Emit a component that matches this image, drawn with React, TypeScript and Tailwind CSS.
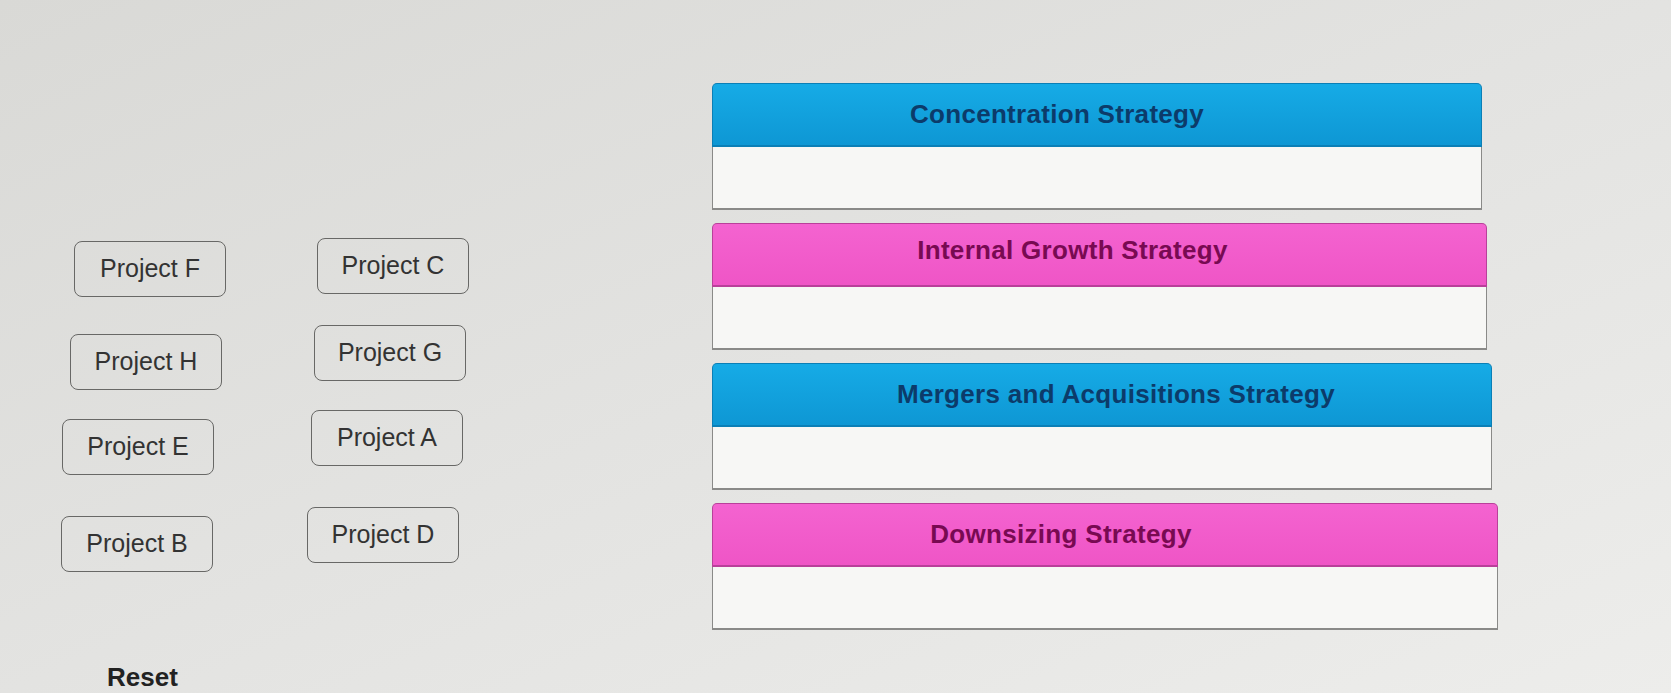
const leftProjects = [
  { label: 'Project F', cls: 'ml-[74px] mt-[241px]' },
  { label: 'Project H', cls: 'ml-[70px] mt-[37px]' },
  { label: 'Project E', cls: 'ml-[62px] mt-[29px]' },
  { label: 'Project B', cls: 'ml-[61px] mt-[41px]' },
]

const rightProjects = [
  { label: 'Project C', cls: 'ml-[317px] mt-[238px]' },
  { label: 'Project G', cls: 'ml-[314px] mt-[31px]' },
  { label: 'Project A', cls: 'ml-[311px] mt-[29px]' },
  { label: 'Project D', cls: 'ml-[307px] mt-[41px]' },
]

type Bucket = {
  title: string
  tone: 'blue' | 'pink'
  width: string
  label: string
}

const buckets: Bucket[] = [
  { title: 'Concentration Strategy', tone: 'blue', width: 'w-[770px]', label: 'pr-[80px]' },
  { title: 'Internal Growth Strategy', tone: 'pink', width: 'w-[775px]', label: 'pr-[54px] pb-[8px]' },
  { title: 'Mergers and Acquisitions Strategy', tone: 'blue', width: 'w-[780px]', label: 'pl-[28px]' },
  { title: 'Downsizing Strategy', tone: 'pink', width: 'w-[786px]', label: 'pr-[88px]' },
]

function ProjectChip({ label, className }: { label: string; className: string }) {
  return (
    <button
      type="button"
      className={`flex h-[56px] w-[152px] items-center justify-center rounded-[8px] border-[1.5px] border-[#686866] text-[25px] text-[#333333] ${className}`}
    >
      {label}
    </button>
  )
}

function DropBucket({ title, tone, width, label }: Bucket) {
  const header =
    tone === 'blue'
      ? 'bg-linear-to-b from-[#16abe6] to-[#0e97d4] border-[#0b7fb6] text-[#0c3b6a]'
      : 'bg-linear-to-b from-[#f463d0] to-[#ef55c6] border-[#b9409a] text-[#780a52]'

  return (
    <div className={`flex flex-col ${width}`}>
      <div
        className={`flex h-[64px] items-center justify-center rounded-t-[5px] border border-b-2 text-[26px] font-bold tracking-[0.3px] ${header} ${label}`}
      >
        {title}
      </div>
      <div className="h-[63px] border-x-[1.5px] border-b-2 border-[#8a8a88] bg-[#f7f7f5]" />
    </div>
  )
}

export default function App() {
  return (
    <div
      className="flex h-[693px] w-full overflow-hidden bg-linear-to-br from-[#d9d9d6] via-[#e3e3e1] to-[#ededeb] text-[#333333]"
      style={{ fontFamily: '"Liberation Sans", Arial, sans-serif' }}
    >
      <div className="flex w-[330px] shrink-0 flex-col">
        <div className="flex flex-col">
          {leftProjects.map((p) => (
            <ProjectChip key={p.label} label={p.label} className={p.cls} />
          ))}
        </div>
        <div className="ml-[107px] mt-[92px] text-[26px] font-bold leading-none text-[#222222]">
          Reset
        </div>
      </div>

      <div className="relative flex w-[300px] shrink-0 flex-col -ml-[330px]">
        {rightProjects.map((p) => (
          <ProjectChip key={p.label} label={p.label} className={p.cls} />
        ))}
      </div>

      <div className="ml-[412px] mt-[83px] flex flex-col gap-[13px]">
        {buckets.map((b) => (
          <DropBucket key={b.title} {...b} />
        ))}
      </div>
    </div>
  )
}
